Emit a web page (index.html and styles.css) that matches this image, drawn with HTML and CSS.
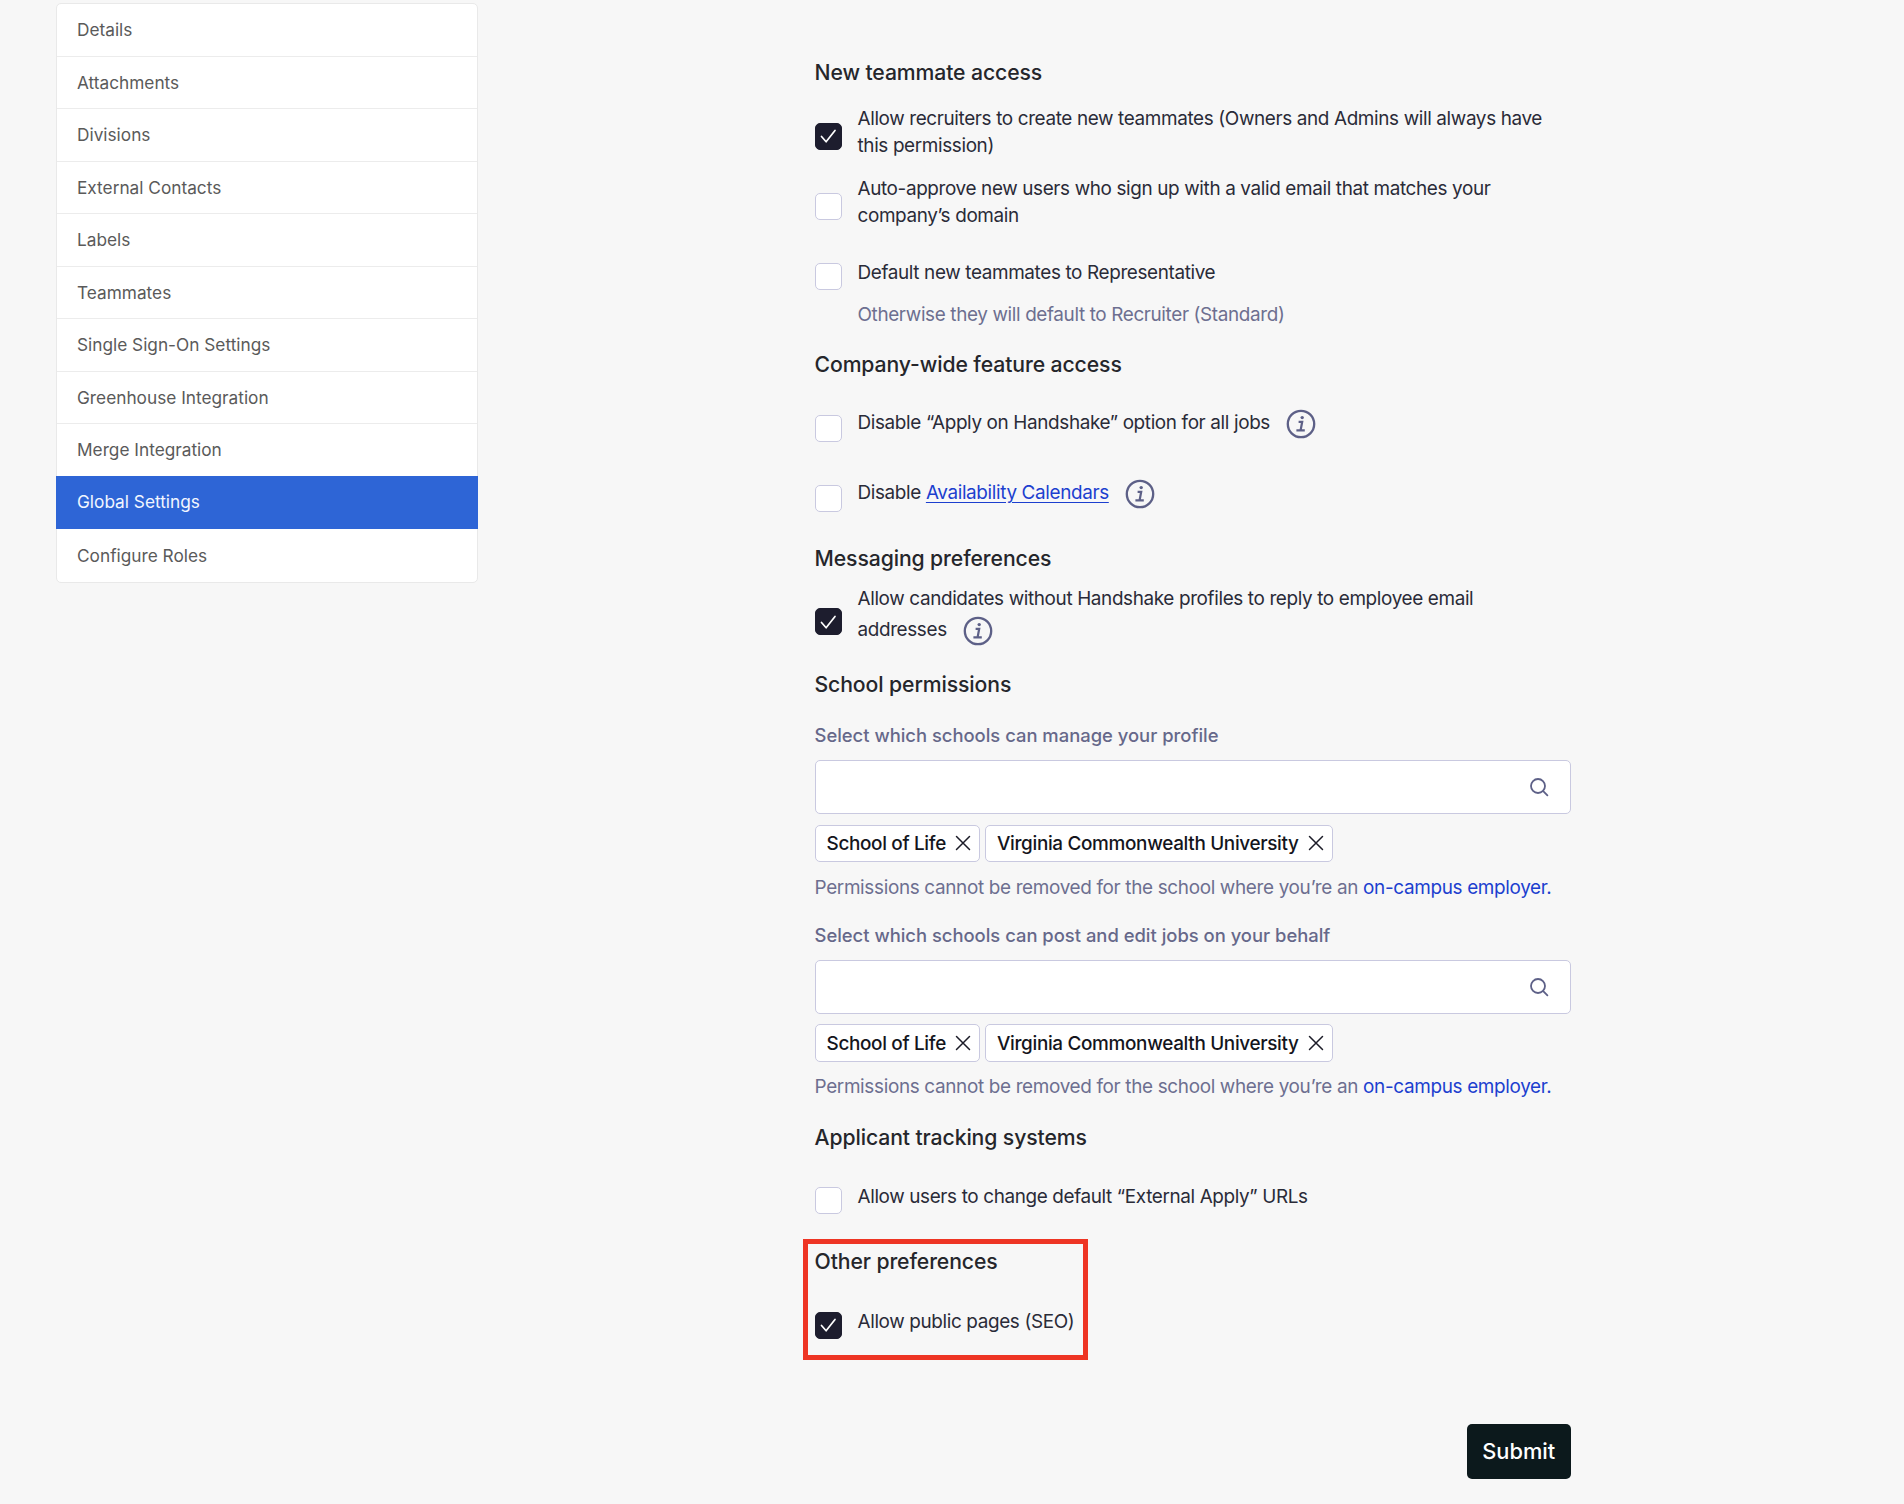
FILE: index.html
```html
<!DOCTYPE html>
<html lang="en">
<head>
<meta charset="utf-8">
<title>Global Settings</title>
<link rel="stylesheet" href="styles.css">
</head>
<body>
<svg class="defs" width="0" height="0" aria-hidden="true">
  <symbol id="check" viewBox="0 0 28 28"><path d="M7.5 14.5l4.6 5.3L21 8.5" fill="none" stroke="#fff" stroke-width="1.7" stroke-linecap="round" stroke-linejoin="round"/></symbol>
  <symbol id="info" viewBox="0 0 30 30"><circle cx="15" cy="15" r="13.2" fill="none" stroke="#5d6087" stroke-width="2.3"/><circle cx="16.2" cy="8.6" r="1.7" fill="#5d6087"/><path d="M12.6 12.8h3.6l-1.5 7.9M10.4 21.4h8.4" fill="none" stroke="#5d6087" stroke-width="2.2"/></symbol>
  <symbol id="close" viewBox="0 0 16 16"><path d="M1.5 1.5l13 13M14.5 1.5l-13 13" fill="none" stroke="#1c1c28" stroke-width="1.5" stroke-linecap="round"/></symbol>
  <symbol id="search" viewBox="0 0 20 20"><circle cx="9" cy="9" r="7" fill="none" stroke="#5d6087" stroke-width="1.8"/><path d="M14.2 14.2l4.2 4.2" fill="none" stroke="#5d6087" stroke-width="1.8" stroke-linecap="round"/></symbol>
</svg>
<div class="page">
  <nav class="sidebar">
    <a class="nav-item">Details</a>
    <a class="nav-item">Attachments</a>
    <a class="nav-item">Divisions</a>
    <a class="nav-item">External Contacts</a>
    <a class="nav-item">Labels</a>
    <a class="nav-item">Teammates</a>
    <a class="nav-item">Single Sign-On Settings</a>
    <a class="nav-item">Greenhouse Integration</a>
    <a class="nav-item">Merge Integration</a>
    <a class="nav-item active">Global Settings</a>
    <a class="nav-item">Configure Roles</a>
  </nav>
  <main class="content">
    <h3 class="heading">New teammate access</h3>
    <div class="row gap-first">
      <span class="box on"><svg class="tick"><use href="#check"/></svg></span>
      <p class="text">Allow recruiters to create new teammates (Owners and Admins will always have this permission)</p>
    </div>
    <div class="row gap-second">
      <span class="box"></span>
      <p class="text">Auto-approve new users who sign up with a valid email that matches your company’s domain</p>
    </div>
    <div class="row gap-third">
      <span class="box"></span>
      <p class="text">Default new teammates to Representative</p>
    </div>
    <p class="sub">Otherwise they will default to Recruiter (Standard)</p>

    <h3 class="heading after-sub">Company-wide feature access</h3>
    <div class="row gap-apply">
      <span class="box"></span>
      <p class="text">Disable “Apply on Handshake” option for all jobs<svg class="info"><use href="#info"/></svg></p>
    </div>
    <div class="row gap-avail">
      <span class="box"></span>
      <p class="text">Disable <a class="link underline">Availability Calendars</a><svg class="info"><use href="#info"/></svg></p>
    </div>

    <h3 class="heading after-row">Messaging preferences</h3>
    <div class="row gap-msg">
      <span class="box on box-low"><svg class="tick"><use href="#check"/></svg></span>
      <p class="text text-tall">Allow candidates without Handshake profiles to reply to employee email addresses<svg class="info"><use href="#info"/></svg></p>
    </div>

    <h3 class="heading after-msg">School permissions</h3>
    <label class="field-label first">Select which schools can manage your profile</label>
    <div class="input"><svg class="search"><use href="#search"/></svg></div>
    <div class="chips">
      <span class="chip">School of Life<svg class="x"><use href="#close"/></svg></span>
      <span class="chip">Virginia Commonwealth University<svg class="x"><use href="#close"/></svg></span>
    </div>
    <p class="note">Permissions cannot be removed for the school where you’re an <a class="link">on-campus employer.</a></p>
    <label class="field-label second">Select which schools can post and edit jobs on your behalf</label>
    <div class="input"><svg class="search"><use href="#search"/></svg></div>
    <div class="chips">
      <span class="chip">School of Life<svg class="x"><use href="#close"/></svg></span>
      <span class="chip">Virginia Commonwealth University<svg class="x"><use href="#close"/></svg></span>
    </div>
    <p class="note">Permissions cannot be removed for the school where you’re an <a class="link">on-campus employer.</a></p>

    <h3 class="heading after-note">Applicant tracking systems</h3>
    <div class="row gap-ats">
      <span class="box"></span>
      <p class="text">Allow users to change default “External Apply” URLs</p>
    </div>

    <section class="highlight">
      <h3 class="heading">Other preferences</h3>
      <div class="row">
        <span class="box on"><svg class="tick"><use href="#check"/></svg></span>
        <p class="text">Allow public pages (SEO)</p>
      </div>
    </section>

    <div class="actions"><button class="submit">Submit</button></div>
  </main>
</div>
</body>
</html>
```
FILE: styles.css
```css
* { box-sizing: border-box; }
html, body { margin: 0; padding: 0; }
body {
  background: #f7f7f7;
  font-family: Inter, "Liberation Sans", sans-serif;
  color: #2a2b38;
  height: 1504px;
  overflow: hidden;
}
.defs { position: absolute; }
.page { display: flex; align-items: flex-start; padding: 3px 0 0 56px; }

.sidebar {
  width: 422px;
  flex: none;
  background: #fff;
  border: 1px solid #e9e9e9;
  border-radius: 5px;
}
.nav-item {
  display: flex;
  align-items: center;
  height: 52.5px;
  padding-left: 20px;
  font-size: 17.25px;
  color: #5a5a5a;
  border-bottom: 1px solid #ececec;
}
.nav-item:last-child { border-bottom: 0; }
.nav-item.active {
  background: #2e65d6;
  color: #f2f6ff;
  border-bottom-color: #2e65d6;
  margin: -1px -1px 0;
  padding-left: 21px;
  height: 53.5px;
}

.content { width: 756.5px; margin-left: 336.5px; padding-top: 55px; flex: none; }

.heading {
  margin: 0;
  font-size: 21.2px;
  letter-spacing: -0.1px;
  line-height: 28px;
  font-weight: 500;
  color: #25262b;
}
.heading.after-sub { margin-top: 22px; }
.heading.after-row { margin-top: 32.8px; }
.heading.after-msg { margin-top: 23.7px; }
.heading.after-note { margin-top: 23px; }

.row { display: flex; align-items: center; gap: 15.5px; }
.gap-first { margin-top: 19px; }
.gap-second { margin-top: 16px; }
.gap-third { margin-top: 26px; }
.gap-apply { margin-top: 28.7px; }
.gap-avail { margin-top: 35px; }
.gap-msg { margin-top: 11px; }
.gap-ats { margin-top: 27.3px; }

.box {
  flex: none;
  width: 27.5px;
  height: 27px;
  margin-top: 8px;
  background: #fff;
  border: 1.5px solid #c9c9e0;
  border-radius: 5px;
  display: flex;
  align-items: center;
  justify-content: center;
}
.box.on { background: #1d1d2e; border-color: #1d1d2e; }
.box.box-low { margin-top: 14px; }
.tick { width: 28px; height: 28px; flex: none; }

.text { margin: 0; font-size: 18.9px; letter-spacing: -0.36px; line-height: 27px; color: #2a2b38; }
.text-tall { line-height: 31px; max-width: 690px; }
.sub { margin: 11px 0 0 43px; font-size: 18.9px; letter-spacing: -0.36px; line-height: 27px; color: #6d6f90; }

.info { width: 30px; height: 30px; margin-left: 16px; vertical-align: -10px; }

.link { color: #1c3fcf; }
.link.underline { text-decoration: underline; text-underline-offset: 3px; }

.field-label {
  display: block;
  font-size: 18.4px;
  line-height: 26px;
  font-weight: 500;
  color: #66688a;
}
.field-label.first { margin-top: 24px; }
.field-label.second { margin-top: 21.2px; }

.input {
  height: 54px;
  margin-top: 12px;
  background: #fff;
  border: 1.5px solid #c9c9e0;
  border-radius: 5px;
  display: flex;
  align-items: center;
  justify-content: flex-end;
  padding-right: 21px;
}
.search { width: 20px; height: 20px; }

.chips { display: flex; gap: 5px; margin-top: 10.5px; }
.chip {
  height: 37.5px;
  display: inline-flex;
  align-items: center;
  gap: 9px;
  padding: 0 8px 0 11px;
  background: #fff;
  border: 1.5px solid #c9c9e0;
  border-radius: 5px;
  font-size: 18.9px;
  letter-spacing: -0.32px;
  font-weight: 500;
  color: #14151c;
}
.x { width: 16px; height: 16px; flex: none; }

.note { margin: 11.5px 0 0; font-size: 18.9px; letter-spacing: -0.33px; line-height: 27px; color: #6d6f90; white-space: nowrap; }

.highlight {
  width: 285px;
  height: 121px;
  margin: 25.8px 0 0 -12px;
  padding: 3px 0 0 7px;
  border: 5px solid #ee3524;
  white-space: nowrap;
}
.highlight .row { margin-top: 28.2px; }

.actions { display: flex; justify-content: flex-end; margin-top: 63.5px; }
.submit {
  width: 104.5px;
  height: 55px;
  background: #0c191c;
  color: #fff;
  border: 0;
  border-radius: 5px;
  font-family: inherit;
  font-size: 21.8px;
  font-weight: 500;
}
```
